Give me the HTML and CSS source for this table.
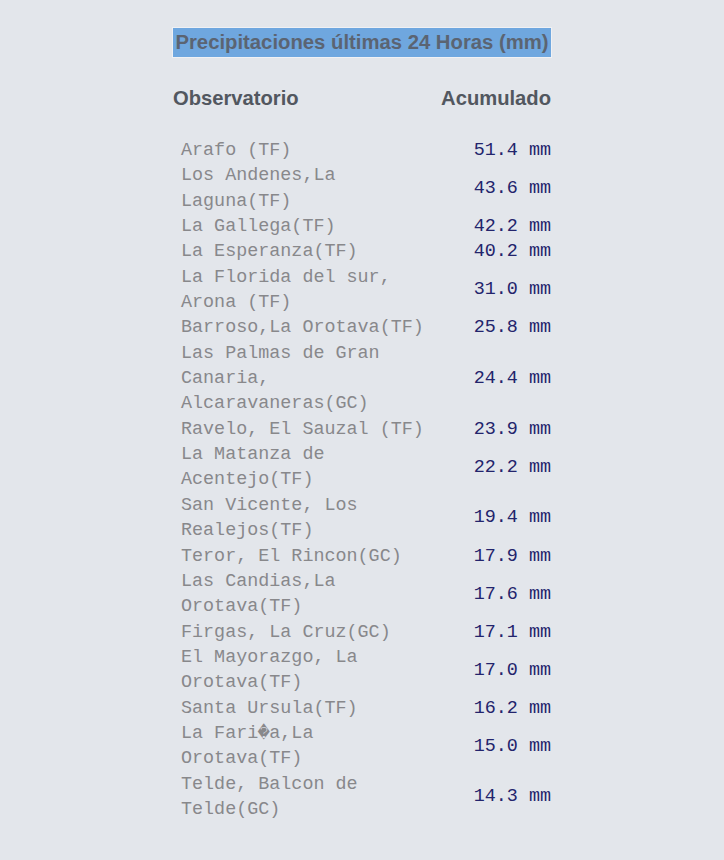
FILE: index.html
```html
<!DOCTYPE html>
<html lang="es">
<head>
<meta charset="utf-8">
<title>Precipitaciones últimas 24 Horas (mm)</title>
<link rel="stylesheet" href="styles.css">
</head>
<body>
<main class="page">
  <h1 class="title"><span class="title-hl">Precipitaciones últimas 24 Horas (mm)</span></h1>
  <div class="head">
    <span>Observatorio</span>
    <span>Acumulado</span>
  </div>
  <div class="list">
    <div class="name">Arafo (TF)</div><div class="val">51.4 mm</div>
    <div class="name">Los Andenes,La Laguna(TF)</div><div class="val">43.6 mm</div>
    <div class="name">La Gallega(TF)</div><div class="val">42.2 mm</div>
    <div class="name">La Esperanza(TF)</div><div class="val">40.2 mm</div>
    <div class="name">La Florida del sur, Arona (TF)</div><div class="val">31.0 mm</div>
    <div class="name">Barroso,La Orotava(TF)</div><div class="val">25.8 mm</div>
    <div class="name">Las Palmas de Gran Canaria, Alcaravaneras(GC)</div><div class="val">24.4 mm</div>
    <div class="name">Ravelo, El Sauzal (TF)</div><div class="val">23.9 mm</div>
    <div class="name">La Matanza de Acentejo(TF)</div><div class="val">22.2 mm</div>
    <div class="name">San Vicente, Los Realejos(TF)</div><div class="val">19.4 mm</div>
    <div class="name">Teror, El Rincon(GC)</div><div class="val">17.9 mm</div>
    <div class="name">Las Candias,La Orotava(TF)</div><div class="val">17.6 mm</div>
    <div class="name">Firgas, La Cruz(GC)</div><div class="val">17.1 mm</div>
    <div class="name">El Mayorazgo, La Orotava(TF)</div><div class="val">17.0 mm</div>
    <div class="name">Santa Ursula(TF)</div><div class="val">16.2 mm</div>
    <div class="name">La Fari&#xFFFD;a,La Orotava(TF)</div><div class="val">15.0 mm</div>
    <div class="name">Telde, Balcon de Telde(GC)</div><div class="val">14.3 mm</div>
  </div>
</main>
</body>
</html>
```
FILE: styles.css
```css
html, body {
  margin: 0;
  padding: 0;
  background: #e3e6eb;
}
body {
  font-family: "Liberation Sans", Arial, sans-serif;
}
.page {
  width: 378px;
  margin: 0 auto;
  padding-top: 28px;
}
.title {
  margin: 0;
  font-size: 20.3px;
  font-weight: bold;
  line-height: 29px;
  text-align: center;
  color: #5b6472;
}
.title-hl {
  display: block;
  background: #6fa7df;
  box-shadow: 0 0 0 1px rgba(255, 255, 255, 0.45);
}
.head {
  display: flex;
  justify-content: space-between;
  margin-top: 29px;
  font-size: 20.2px;
  font-weight: bold;
  line-height: 24px;
  color: #52575f;
}
.list {
  display: grid;
  grid-template-columns: 258px 1fr;
  align-items: center;
  margin-top: 28px;
  font-family: "Courier New", "Nimbus Mono PS", "FreeMono", "Liberation Mono", monospace;
  font-size: 18.4px;
  line-height: 25.35px;
}
.name {
  padding-left: 8px;
  color: #88888b;
}
.val {
  text-align: right;
  color: #23246c;
}
```
